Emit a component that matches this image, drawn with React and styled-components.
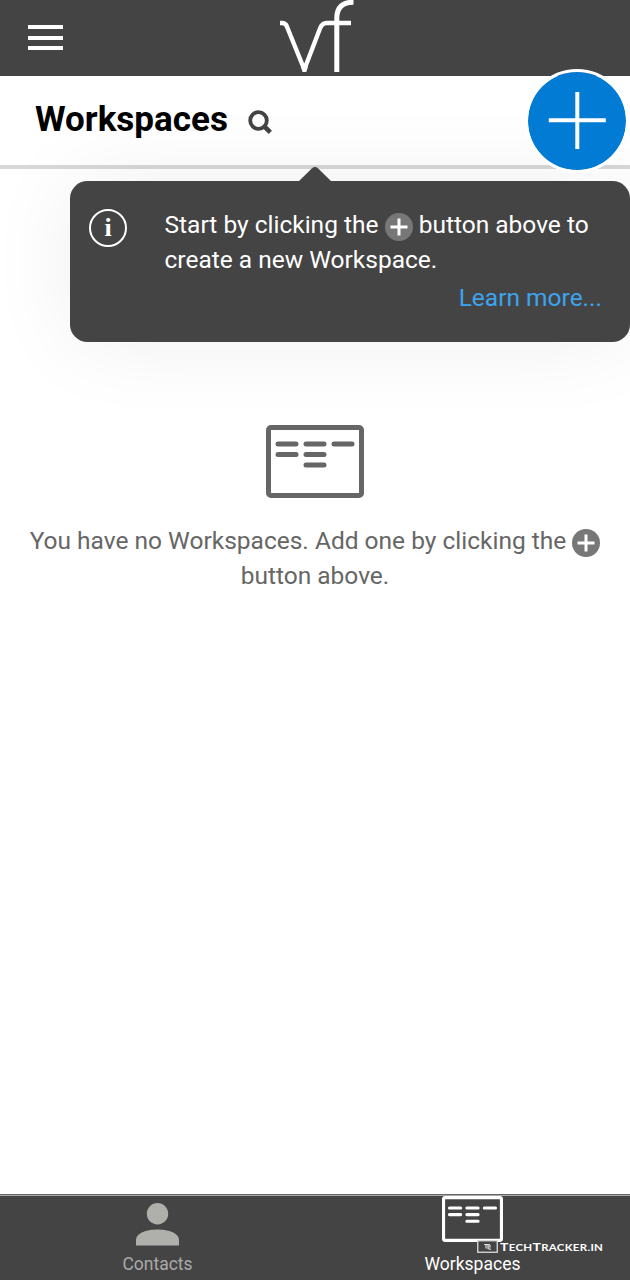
import React from "react";
import styled, { createGlobalStyle } from "styled-components";

const GlobalStyle = createGlobalStyle`
  * { box-sizing: border-box; }
  body { margin: 0; background: #fff; font-family: Roboto, "Liberation Sans", sans-serif; }
`;

const Screen = styled.div`
  width: 630px;
  height: 1280px;
  display: flex;
  flex-direction: column;
  background: #fff;
  overflow: hidden;
`;

const Header = styled.header`
  height: 76px;
  flex: none;
  display: grid;
  grid-template-columns: 280px 74px 1fr;
  background: #444;
`;

const MenuButton = styled.button`
  width: 35px;
  height: 25px;
  margin: 25px 0 0 28px;
  padding: 0;
  border: 0;
  background: none;
  display: flex;
  flex-direction: column;
  justify-content: space-between;
`;

const MenuLine = styled.span`
  height: 4px;
  background: #fff;
`;

const Drawing = styled.svg`
  display: block;
  flex: none;
`;

const TitleBar = styled.div`
  position: relative;
  height: 93px;
  flex: none;
  display: flex;
  align-items: flex-start;
  padding: 23px 0 0 35px;
  border-bottom: 4px solid #d8d8d8;
`;

const Title = styled.h1`
  margin: 0;
  width: 213px;
  font-size: 35px;
  line-height: 42px;
  font-weight: 700;
  color: #000;
`;

const SearchIcon = styled(Drawing)`
  margin-top: 11px;
`;

const AddButton = styled.button`
  position: absolute;
  z-index: 2;
  top: -7px;
  right: 1px;
  width: 104px;
  height: 104px;
  padding: 0;
  border: 3px solid #fff;
  border-radius: 50%;
  background: #027bd5;
  background-clip: padding-box;
  display: flex;
  align-items: center;
  justify-content: center;
`;

const Main = styled.main`
  flex: 1;
  padding-top: 12px;
`;

const Tip = styled.section`
  position: relative;
  height: 161px;
  margin-left: 70px;
  padding: 26px 28px 0 19px;
  display: flex;
  border-radius: 17.5px;
  background: #444;
  color: #fff;
  box-shadow: 0 0 88px rgba(0, 0, 0, 0.065);
`;

const TipArrow = styled(Drawing)`
  position: absolute;
  left: 228px;
  top: -14px;
`;

const InfoBadge = styled.span`
  flex: none;
  width: 38px;
  height: 38px;
  margin: 2px 37.5px 0 0;
  border: 2px solid #fff;
  border-radius: 50%;
  text-align: center;
  font: 700 26px/34px "Liberation Serif", serif;
`;

const TipBody = styled.div`
  flex: 1;
  font-size: 24.5px;
  line-height: 35px;
`;

const Copy = styled.p`
  margin: 0;
  white-space: nowrap;
`;

const LearnMore = styled.a`
  display: block;
  margin-top: 3px;
  text-align: right;
  color: #3ca4ef;
`;

const InlinePlus = styled.svg`
  width: 28px;
  height: 28px;
  vertical-align: -7.5px;
`;

const Empty = styled.section`
  margin-top: 83px;
  display: flex;
  flex-direction: column;
  align-items: center;
  gap: 25px;
  text-align: center;
  color: #666;
  font-size: 24.5px;
  line-height: 35px;
`;

const TabBar = styled.nav`
  flex: none;
  height: 86px;
  display: grid;
  grid-template-columns: 1fr 1fr;
  border-top: 1px solid #666;
  background: #444;
  box-shadow: inset 0 1px 0 #aaa;
`;

const Tab = styled.div`
  position: relative;
  display: flex;
  flex-direction: column;
  align-items: center;
  color: ${(p) => (p.$active ? "#fff" : "#aaa")};
`;

const TabIcon = styled.div`
  height: 57px;
  padding-top: ${(p) => p.$top}px;
`;

const TabLabel = styled.span`
  font-size: 17.5px;
  line-height: 24px;
`;

const Watermark = styled.div`
  position: absolute;
  left: 162px;
  top: 45px;
  height: 13px;
  display: flex;
  align-items: center;
  gap: 1.5px;
  color: #fff;
`;

const WatermarkText = styled.span`
  font: 700 9.8px/13px Lato, sans-serif;
  text-transform: uppercase;
  letter-spacing: 0.25px;
  white-space: nowrap;
  transform: scaleX(1.17);
  transform-origin: left center;
`;

const Cap = styled.span`
  font-size: 12px;
`;

const PlusGlyph = ({ fill }) => (
  <InlinePlus viewBox="0 0 28 28">
    <circle cx="14" cy="14" r="14" fill={fill} />
    <path d="M14 5.5v17M5.5 14h17" stroke="#fff" strokeWidth="3" />
  </InlinePlus>
);

const BoardIcon = ({ width, height, color }) => (
  <Drawing width={width} height={height} viewBox="0 0 98 73" preserveAspectRatio="none" fill="none" stroke={color}>
    <rect x="2.5" y="2.5" width="93" height="68" rx="2.5" strokeWidth="5" />
    <path
      d="M12 19h18M40 19h18M68 19h18M12 29.5h18M40 29.5h18M40 40h18"
      strokeWidth="5"
      strokeLinecap="round"
    />
  </Drawing>
);

export default function App() {
  return (
    <>
      <GlobalStyle />
      <Screen>
        <Header>
          <MenuButton aria-label="Menu">
            <MenuLine />
            <MenuLine />
            <MenuLine />
          </MenuButton>
          <Drawing width="74" height="76" viewBox="0 0 74 76" fill="none" stroke="#fff">
            <path d="M0 23H2Q5.500 23 6.800 26.200L24.300 69.500L40 28.500Q42.200 23 46.500 23H71" strokeWidth="4.400" strokeLinejoin="bevel" />
            <path d="M21 67L22.600 72H26.200L28 67Z" fill="#fff" stroke="none" />
            <path d="M56.800 72V18Q56.800 2.200 73.500 2.200" strokeWidth="5" />
          </Drawing>
        </Header>
        <TitleBar>
          <Title>Workspaces</Title>
          <SearchIcon width="25" height="25" viewBox="0 0 25 25" fill="none" stroke="#444">
            <circle cx="10.500" cy="10.500" r="8.300" strokeWidth="3.800" />
            <path d="M16 16l6.300 6.300" strokeWidth="4.600" />
          </SearchIcon>
          <AddButton aria-label="Add workspace">
            <Drawing width="58" height="58" viewBox="0 0 58 58" stroke="#fff" strokeWidth="4">
              <path d="M29.300 0v57M0.800 28.300h57" />
            </Drawing>
          </AddButton>
        </TitleBar>
        <Main>
          <Tip>
            <TipArrow width="34" height="15" viewBox="0 0 34 15" fill="#444">
              <path d="M0 15L13.800 1.500Q17 -1.300 20.200 1.500L34 15Z" />
            </TipArrow>
            <InfoBadge>i</InfoBadge>
            <TipBody>
              <Copy>
                Start by clicking the <PlusGlyph fill="#777" /> button above to
                <br />
                create a new Workspace.
              </Copy>
              <LearnMore>Learn more...</LearnMore>
            </TipBody>
          </Tip>
          <Empty>
            <BoardIcon width={98} height={73} color="#666" />
            <Copy>
              You have no Workspaces. Add one by clicking the <PlusGlyph fill="#777" />
              <br />
              button above.
            </Copy>
          </Empty>
        </Main>
        <TabBar>
          <Tab>
            <TabIcon $top={8}>
              <Drawing width="43" height="43" viewBox="0 0 43 43" fill="#afafab">
                <circle cx="21.500" cy="10.700" r="10.700" />
                <path d="M0 42.500V37C0 29.500 12 26.500 21.500 26.500S43 29.500 43 37V42.500Z" />
              </Drawing>
            </TabIcon>
            <TabLabel>Contacts</TabLabel>
          </Tab>
          <Tab $active>
            <TabIcon $top={1}>
              <BoardIcon width={61} height={46} color="#fff" />
            </TabIcon>
            <TabLabel>Workspaces</TabLabel>
            <Watermark>
              <Drawing width="21" height="13" viewBox="0 0 21 13" fill="none" stroke="#ddd">
                <rect x="0.750" y="0.750" width="19.500" height="11.500" fill="#444" strokeWidth="1.300" />
                <path d="M7 4.500h6M9 5v3.500M11 5v3.500l3 1M11 7h2V5" strokeWidth="1.200" />
              </Drawing>
              <WatermarkText>
                <Cap>T</Cap>ech<Cap>T</Cap>racker.in
              </WatermarkText>
            </Watermark>
          </Tab>
        </TabBar>
      </Screen>
    </>
  );
}
